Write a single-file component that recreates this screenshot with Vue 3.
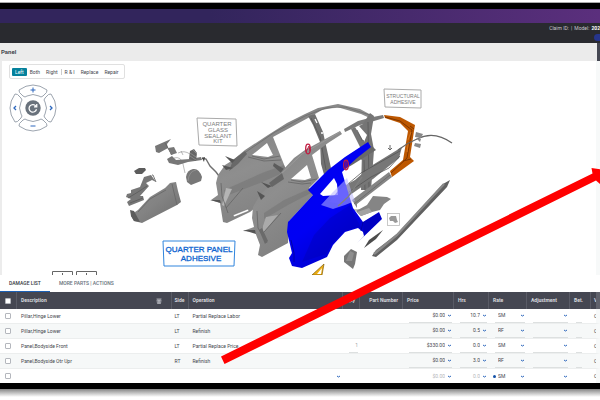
<script setup>
import { ref } from 'vue'

const side = ref('Left')
const sides = ['Left', 'Both', 'Right']
const actions = ['R & I', 'Replace', 'Repair']

const lines = ref([
  { id: 1, description: 'Pillar,Hinge Lower', side: 'LT', operation: 'Partial Replace Labor', qty: '', price: '$0.00', hrs: '10.7', rate: 'SM' },
  { id: 2, description: 'Pillar,Hinge Lower', side: 'LT', operation: 'Refinish', qty: '', price: '$0.00', hrs: '0.5', rate: 'RF' },
  { id: 3, description: 'Panel,Bodyside Front', side: 'LT', operation: 'Partial Replace Price', qty: '1', price: '$330.00', hrs: '0.0', rate: 'SM' },
  { id: 4, description: 'Panel,Bodyside Otr Upr', side: 'RT', operation: 'Refinish', qty: '', price: '$0.00', hrs: '3.0', rate: 'RF' },
  { id: 5, description: '', side: '', operation: '', qty: '', price: '$0.00', hrs: '0.0', rate: 'SM', draft: true }
])
</script>

<template>
  <div class="page">
    <div class="device">
      <div class="brand"></div>
      <header class="claim">
        <div class="claim-line"><span>Claim ID:</span><span class="bar">|</span><span>Model:</span><b>202</b></div>
        <button class="pill" type="button" aria-label="Claim details"></button>
      </header>
      <div class="crumb"><h1>Panel</h1><span class="crumb-end"></span></div>

      <main class="viewer">
        <svg class="scene" viewBox="0 61 600 214" preserveAspectRatio="xMinYMin meet" role="img" aria-label="Exploded view of the body side">
          <defs>
            <linearGradient id="steel" x1="0" y1="0" x2="1" y2="1">
              <stop offset="0" stop-color="#8c8c8c" /><stop offset=".5" stop-color="#838383" /><stop offset="1" stop-color="#6c6c6c" />
            </linearGradient>
            <linearGradient id="panel" x1="0" y1="0" x2=".6" y2="1">
              <stop offset="0" stop-color="#7c7c7c" /><stop offset=".5" stop-color="#8e8e8e" /><stop offset="1" stop-color="#7c7c7c" />
            </linearGradient>
            <linearGradient id="blue" x1="0" y1="0" x2=".6" y2="1">
              <stop offset="0" stop-color="#0000f0" /><stop offset=".6" stop-color="#0000f4" /><stop offset="1" stop-color="#0000c4" />
            </linearGradient>
          </defs>

          <!-- lamp wiring and trim -->
          <g fill="#777">
            <path d="M155 146 171 139 167 144 168 148 159 153 156 152Z" />
            <path d="M165 143 172 155" stroke="#666" fill="none" />
            <path d="M168 148 174 147 177 153 171 155Z" fill="#777" />
            <path d="M167 159 172 156 176 160 190 159 201 157 202 160 188 162 178 165 169 163Z" />
            <path d="M178 153Q184 150 190 154M174 158Q181 156 183 164L185 173M181 151 183 155" stroke="#777" stroke-width=".5" fill="none" />
            <path d="M190 151 194 149 197 153 196 161 189 159Z" fill="#666" />
            <path d="M190 153 196 157M190 156 196 160M193 150 197 154" stroke="#aaa" stroke-width=".5" />
            <path d="M202 158 206 159 210 166 216 172 219 176" stroke="#707070" stroke-width="1.4" fill="none" />
            <path d="M202 158 205 157 204 162Z" fill="#444" />
            <path d="M186 177Q187 170 193 169Q199 168 202 177L201 181 191 185 187 182Z" />
            <path d="M188 181Q189 171 196 170" stroke="#999" stroke-width=".7" fill="none" />
            <path d="M134 171 139 168 145 168 146 170 142 174 136 174Z" fill="#5c5c5c" />
            <path d="M131 190 140 187 144 177 151 175 156 182 152 180 146 183 149 186 140 196 143 196 144 200 129 206 127 202 131 199 126 197 127 194 131 193Z" />
            <path d="M152 175 153 175 156 182M128 198 138 192 147 186M130 203 143 198" stroke="#5a5a5a" stroke-width=".8" fill="none" />
            <path d="M132 214 138 210 150 197 165 188 170 183 176 182 178 191 181 202 177 205 142 223 134 221 131 216Z" fill="url(#steel)" />
            <path d="M172 184 177 205M138 212 150 199 166 190" stroke="#666" stroke-width=".8" fill="none" />
            <path d="M130 210 134 211 140 222 134 221 131 216Z" fill="#5c5c5c" />
          </g>

          <!-- outer body side, gray -->
          <path fill="url(#panel)" fill-rule="evenodd" d="M218 175 225 165 233 160 245 150 268 135 287 123 305 114 318 108 338 104 360 109 373 116 374 120 361 114 337 107 322 110 308 118 273 137 285 167 290 175 272 190 259 205 250 212 227 223 223 222 220 203 211 200 218 195 216 183ZM252 155 267 143 273 155 268 157Z" />
          <path d="M240 156 275 132 305 116 326 108 345 107 370 115" stroke="#686868" stroke-width=".7" fill="none" />
          <path d="M252 156 264 159 280 156M248 157 264 161 281 160" stroke="#606060" stroke-width=".7" fill="none" />
          <path d="M224 190 262 173 284 165 287 171 260 183 226 196Z" fill="#666" opacity=".35" />
          <path d="M274 163 284 169 281 173 273 166Z" fill="#5c5c5c" />
          <path d="M229 171 233 160 245 151 247 154 238 164Z" fill="#686868" />
          <path d="M225 156 235 160 232 163ZM222 165 233 168 226 170ZM210 200 220 200 221 203Z" fill="#555" />
          <path d="M222 205 226 188 232 189 224 206Z" fill="#b4b4b4" />
          <path d="M221 183 222 196 228 213M226 208 243 188" stroke="#646464" stroke-width=".8" fill="none" />
          <path d="M233 215 248 209 249 211 234 217Z" fill="#fff" stroke="#666" stroke-width=".5" />
          <path d="M308 116 315 114 323 132 331 168 325 178 321 164 320 142 313 125Z" fill="#717171" />
          <path d="M311 118 320 137 326 170" stroke="#565656" stroke-width=".8" fill="none" />
          <path d="M315 119 317 123" stroke="#fff" stroke-width="1.3" />
          <circle cx="322" cy="133" r="1" fill="#fff" />

          <!-- inner body side, gray -->
          <path fill="url(#panel)" fill-rule="evenodd" d="M340 131 342 134 328 143 312 155 319 178 309 188 314 194 289 221 288 243 262 257 258 255 260 245 255 232 243 231 254 227 252 218 253 207 260 195 272 183 283 170 294 158 305 150ZM291 179 307 165 311 178 305 180Z" />
          <path d="M278 177 302 154 340 132" stroke="#9c9c9c" stroke-width=".9" fill="none" />
          <path d="M291 180 302 182 317 179M288 182 302 184 311 183" stroke="#606060" stroke-width=".7" fill="none" />
          <path d="M264 213 284 200 311 188 313 192 288 205 264 219Z" fill="#666" opacity=".35" />
          <path d="M269 183 282 173 284 179 272 187Z" fill="#666" />
          <path d="M261 182 272 186 268 188ZM257 191 265 196 261 200ZM243 230 255 230 256 234Z" fill="#555" />
          <path d="M263 226 266 217 278 215 263 233Z" fill="#aaa" />
          <path d="M257 211 258 228 267 243M264 232 281 213" stroke="#646464" stroke-width=".8" fill="none" />
          <path d="M259 230 262 228 268 241 265 244Z" fill="#6a6a6a" />

          <!-- inner frame and pillars -->
          <path d="M344 129 358 121 373 117 383 115 384 118 374 121 360 125 345 132Z" fill="#7a7a7a" />
          <path d="M370 113 374 116 371 134 374 150 371 190 361 190 362 151 351 129 355 127 364 142 367 135 359 126 363 124Z" fill="#757575" />
          <path d="M357 130 364 144M368 122 369 188M364 160 365 190" stroke="#585858" stroke-width=".8" fill="none" />
          <path d="M337 190 355 180 371 166 402 147 399 158 373 179 340 202Z" fill="#777" />
          <path d="M361 141 364 140 364 158 361 160Z" fill="#757575" />
          <path d="M343 196 371 177 389 168 400 156M348 184 361 173 400 151" stroke="#555" stroke-width=".8" fill="none" />
          <path d="M352 200 389 172 392 177 357 204 357 208Z" fill="#858585" />
          <path d="M354 204 390 175M353 210 364 210 370 204" stroke="#666" stroke-width=".8" fill="none" />
          <path d="M372 146 376 150 352 165 345 169 345 166Z" fill="#686868" />
          <path d="M390 145 390 150M388 148 390 150 392 148" stroke="#666" fill="none" />

          <!-- rear pillar, orange -->
          <path d="M384 115 400 117 415 125 414 131 410 157 414 161 392 177 390 171 403 160 408 131 400 123 385 118Z" fill="#bd5700" />
          <path d="M385 117 400 121 412 130 407 158 391 173M410 126 414 129M403 161 411 159" stroke="#7d3600" fill="none" />
          <path d="M411 132 408 140M408 144 407 152" stroke="#d8761d" fill="none" />
          <path d="M398 150Q407 143 417 139Q434 130 452 143" stroke="#656565" stroke-width="1.2" fill="none" />
          <path d="M416 132 423 134 421 138 415 137ZM415 143 421 144 420 148 414 146ZM416 138 421 139 420 142Z" fill="#898989" />

          <!-- quarter panel, blue -->
          <path d="M308 190 328 170 345 157 368 142 371 147 357 158 342 172 348 192 353 208 363 222 379 212 382 219 357 243 364 236 363 232 358 228 345 232 333 245 327 257 302 268 292 266 289 258 292 253 287 232 288 222 313 195Z" fill="url(#blue)" />
          <path d="M320 194 334 178 337 184 338 195 323 196Z" fill="#fff" />
          <path d="M291 240 294 253 294 262M363 222 361 231" stroke="#0000a4" fill="none" />
          <path d="M350 205 330 218 314 235 302 262 326 254 333 243 345 231 358 227 362 229 357 220Z" fill="#0000a4" opacity=".3" />
          <path d="M363 222 379 213 381 219 364 235Z" fill="#0000b0" opacity=".5" />
          <path d="M321 205 333 192 347 178 351 190 355 201 345 205 333 209Z" fill="#b8b4ff" opacity=".55" />
          <path d="M329 202 338 191 346 184 348 197 340 204Z" fill="#6c66ff" opacity=".6" />
          <path d="M338 206 348 197 362 177" stroke="#808080" stroke-width="1.3" fill="none" />
          <path d="M356 211 367 205 373 196 387 197 391 199 384 204 380 210 372 212 361 216Z" fill="#858585" />
          <path d="M357 212 369 208 372 212 361 216Z" fill="#a2a2a2" />
          <path d="M344 256 351 249 357 252 355 264 353 269 344 262Z" fill="#777" />
          <path d="M350 251 354 253 352 261 346 261Z" fill="#8e8e8e" />
          <path d="M364 248 369 240 383 230 376 239Z" fill="#4c4c4c" />
          <path d="M450 180 447 187 397 240 376 257 372 256 376 250 397 234 443 184Z" fill="#606060" />
          <path d="M374 254 397 235 444 184" stroke="#888" fill="none" stroke-width="2.4" />
          <path d="M312 275 324 264 322 275Z" fill="#edae13" stroke="#7e5b08" stroke-width=".7" />
          <path d="M317 274 322 268 321 274Z" fill="#fff" />
          <g fill="none" stroke="#c01c40" stroke-width="1.300">
            <ellipse cx="308" cy="149" rx="2.3" ry="4.800" /><path d="M306 152 309 146 310 151" stroke-width="1" />
            <ellipse cx="346" cy="165" rx="2.3" ry="4.800" /><path d="M346 161V169" stroke-width="1" />
          </g>

          <!-- labels -->
          <path d="M197 118 236 119 237 146 199 145Z" fill="#fff" stroke="#aaa" />
          <g class="tag kit"><text x="217" y="126">QUARTER</text><text x="218" y="132">GLASS</text><text x="218" y="138">SEALANT</text><text x="218" y="143">KIT</text></g>
          <path d="M384 89 421 90 421 108 385 107Z" fill="#fff" stroke="#aaa" />
          <g class="tag small"><text x="403" y="98">STRUCTURAL</text><text x="403" y="104">ADHESIVE</text></g>
          <path d="M163 241 235 241 234 266 164 266Z" fill="#fff" stroke="#3185dd" />
          <g class="tag picked"><text x="199" y="252">QUARTER PANEL</text><text x="201" y="261">ADHESIVE</text></g>
          <rect x="387.500" y="213.500" width="12" height="12" fill="#fff" stroke="#bbb" stroke-width=".8" />
          <path d="M389 218 391 216 396 216 397 220 398 222 395 223 393 221 390 221Z" fill="#999" />
          <path d="M52.500 276V271.500H72.500V276M76.500 276V271.500H96.500V276M62.500 275V273M86.500 275V273" stroke="#666" fill="none" />
        </svg>

        <div class="tools">
          <div class="toolbar">
            <button v-for="s in sides" :key="s" type="button" :class="{ on: side === s }" @click="side = s">{{ s }}</button>
            <span class="sep"></span>
            <button v-for="a in actions" :key="a" type="button">{{ a }}</button>
          </div>
          <div class="dial">
            <svg class="ring" viewBox="0 0 48 48" fill="#fff" stroke="#929ba6" stroke-width=".9" aria-hidden="true">
              <path d="M10 6Q24-4 38 6Q39 8 34 12Q32 14 30 12Q24 9 18 12Q16 14 14 12Q9 8 10 6Z" />
              <path d="M10 42Q24 52 38 42Q39 40 34 36Q32 34 30 36Q24 39 18 36Q16 34 14 36Q9 40 10 42Z" />
              <path d="M6 10Q-4 24 6 38Q8 39 12 34Q14 32 12 30Q9 24 12 18Q14 16 12 14Q8 9 6 10Z" />
              <path d="M42 10Q52 24 42 38Q40 39 36 34Q34 32 36 30Q39 24 36 18Q34 16 36 14Q40 9 42 10Z" />
              <circle cx="24" cy="24" r="7.700" fill="#69727c" stroke="none" />
            </svg>
            <button class="up" type="button" aria-label="Zoom in"><svg viewBox="0 0 8 8"><path d="M4 1.500V6.500M1.500 4H6.500" /></svg></button>
            <button class="west" type="button" aria-label="Rotate left"><svg viewBox="0 0 8 8"><path d="M5 2 3 4 5 6" stroke-width="1.300" /></svg></button>
            <button class="mid" type="button" aria-label="Reset view"><svg viewBox="0 0 8 8"><path d="M6.300 2.500A3 3 0 1 0 6.800 5M7 .8V3H4.800" /></svg></button>
            <button class="east" type="button" aria-label="Rotate right"><svg viewBox="0 0 8 8"><path d="M3 2 5 4 3 6" stroke-width="1.300" /></svg></button>
            <button class="down" type="button" aria-label="Zoom out"><svg viewBox="0 0 8 8"><path d="M1.500 4H6.500" /></svg></button>
          </div>
        </div>
      </main>

      <section class="sheet">
        <nav class="tabs">
          <button class="tab active" type="button">DAMAGE LIST</button>
          <button class="tab" type="button">MORE PARTS | ACTIONS</button>
        </nav>
        <table>
          <colgroup>
            <col class="w-check"><col class="w-wide"><col class="w-check"><col class="w-wide"><col class="w-check">
            <col class="w-part"><col class="w-price"><col class="w-hrs"><col class="w-rate"><col class="w-part"><col class="w-bet"><col class="w-end">
          </colgroup>
          <thead>
            <tr>
              <th><input type="checkbox" aria-label="Select all lines"></th>
              <th>
                <div class="head-split">Description
                  <button type="button" aria-label="Delete selected"><svg viewBox="0 0 6 6"><path d="M.5 1H5.500M1 2H5L4.500 5.500H1.500ZM2.500 2V5M3.500 2V5" /></svg></button>
                </div>
              </th>
              <th class="tight">Side</th><th>Operation</th><th class="num">Qty</th><th class="num">Part Number</th>
              <th>Price</th><th>Hrs</th><th>Rate</th><th>Adjustment</th><th>Bet.</th><th class="tight">V</th>
            </tr>
          </thead>
          <tbody>
            <tr v-for="l in lines" :key="l.id" :class="{ draft: l.draft }">
              <td><input type="checkbox" :aria-label="'Select line ' + l.id"></td>
              <td>{{ l.description }}</td>
              <td class="tight">{{ l.side }}</td>
              <td>
                <div v-if="l.draft" class="open"><button type="button" aria-label="Choose operation"><svg class="chev" viewBox="0 0 5 5"><path d="M1 2Q2.500 4 4 2" /></svg></button></div>
                <template v-else>{{ l.operation }}</template>
              </td>
              <td><div v-if="l.qty" class="field qty"><input v-model="l.qty" type="text" aria-label="Quantity"></div></td>
              <td></td>
              <td>
                <div class="field"><input v-model="l.price" type="text" aria-label="Price"><button type="button" aria-label="Price options"><svg class="chev" viewBox="0 0 5 5"><path d="M1 2Q2.500 4 4 2" /></svg></button></div>
              </td>
              <td>
                <div class="field"><input v-model="l.hrs" type="text" aria-label="Hours"><button type="button" aria-label="Hours options"><svg class="chev" viewBox="0 0 5 5"><path d="M1 2Q2.500 4 4 2" /></svg></button></div>
              </td>
              <td>
                <div class="field rate">
                  <span v-if="l.draft" class="dot"></span>
                  <select v-model="l.rate" aria-label="Rate"><option>SM</option><option>RF</option></select>
                  <svg class="chev" viewBox="0 0 5 5"><path d="M1 2Q2.500 4 4 2" /></svg>
                </div>
              </td>
              <td>
                <div class="field"><input type="text" aria-label="Adjustment"><button type="button" aria-label="Adjustment options"><svg class="chev" viewBox="0 0 5 5"><path d="M1 2Q2.500 4 4 2" /></svg></button></div>
              </td>
              <td><div class="field bet"><input type="text" aria-label="Betterment"></div></td>
              <td class="tight end">C</td>
            </tr>
          </tbody>
        </table>
      </section>
    </div>
    <div class="shade"></div>

    <svg class="arrow" viewBox="0 0 600 400" preserveAspectRatio="xMinYMin meet" aria-hidden="true">
      <path d="M221 356.500 592.500 173.500 591.500 168 604 170 600 184 596 180.500 224.500 364Z" fill="#f00" />
    </svg>
  </div>
</template>

<style>
body {
  background: #fff;
  overflow-x: hidden;
}
</style>

<style scoped>
* {
  box-sizing: border-box;
}
.page {
  position: relative;
  overflow: hidden;
  padding-top: 3px;
  font-family: Roboto, "Liberation Sans", sans-serif;
  font-size: 5px;
  color: #44474e;
}
button, input, select {
  font: inherit;
  color: inherit;
  border: 0;
  padding: 0;
  margin: 0;
  background: none;
  min-width: 0;
}
svg {
  display: block;
}
.device {
  border-top: 6px solid #000;
  border-bottom: 6px solid #000;
  box-shadow: 0 -1px 0 #aaa;
}
.shade {
  height: 8px;
  background: linear-gradient(#858585, #fff);
}
.brand {
  height: 14px;
  background: linear-gradient(90deg, #32255c 0 35%, #5b2f7d);
}
.claim {
  height: 20px;
  background: #292a2f;
  color: #c6c6ca;
  display: flex;
  flex-direction: column;
  align-items: flex-end;
  gap: 2px;
  padding-top: 2px;
  overflow: hidden;
}
.claim-line {
  display: flex;
  gap: 2px;
  line-height: 7px;
  white-space: nowrap;
}
.claim-line b {
  color: #fff;
}
.pill {
  width: 6px;
  height: 7px;
  border-radius: 4px 0 0 4px;
  background: #26358c;
}
.crumb {
  height: 18px;
  background: #ebebeb;
  display: flex;
  justify-content: space-between;
  align-items: center;
}
.crumb h1 {
  margin: 0 1px;
  font-size: 6px;
  line-height: 8px;
}
.crumb-end {
  width: 3px;
  height: 18px;
  background: #454752;
}
.viewer {
  display: grid;
  background: #fff;
  border-left: 2px solid #ececec;
  border-right: 4px solid #f7f9f9;
}
.scene, .tools {
  grid-area: 1 / 1;
}
.scene {
  width: calc(100% + 6px);
  margin: 0 -4px 0 -2px;
}
.tag {
  font-family: "Liberation Sans", sans-serif;
  text-anchor: middle;
  fill: #7c7c7c;
}
.kit {
  font-size: 6px;
}
.small {
  font-size: 5px;
}
.picked {
  font-size: 8px;
  fill: #0b63cf;
  stroke: #0b63cf;
  stroke-width: .3px;
}
.tools {
  padding: 3px 7px;
  display: flex;
  flex-direction: column;
  align-items: flex-start;
  gap: 5px;
}
.toolbar {
  display: flex;
  align-items: center;
  height: 15px;
  padding: 0 2px;
  border: 1px solid #e0e0e0;
  border-radius: 2px;
  background: #fff;
}
.toolbar button {
  height: 8px;
  line-height: 8px;
  padding: 0 3px;
}
.toolbar .on {
  background: #04819c;
  color: #fff;
  border-radius: 1px;
}
.sep {
  width: 1px;
  height: 6px;
  background: #ccc;
}
.dial {
  display: grid;
  grid-template-columns: repeat(3, 16px);
  grid-template-rows: repeat(3, 16px);
  grid-template-areas: ". n ." "w c e" ". s .";
}
.dial .ring {
  grid-area: 1 / 1 / 4 / 4;
  width: 48px;
  height: 48px;
}
.dial button {
  display: grid;
  place-items: center;
}
.dial button svg {
  width: 8px;
  height: 8px;
  fill: none;
  stroke: #2c67bd;
}
.dial .up { grid-area: n; padding-bottom: 4px; }
.dial .west { grid-area: w; padding-right: 4px; }
.dial .mid { grid-area: c; }
.dial .east { grid-area: e; padding-left: 4px; }
.dial .down { grid-area: s; padding-top: 4px; }
.dial .mid svg {
  width: 10px;
  height: 10px;
  stroke: #fff;
}
.sheet {
  overflow: hidden;
}
.tabs {
  display: flex;
  height: 17px;
  background: #fff;
  box-shadow: 0 -1px 1px #eee;
}
.tab {
  padding: 0 9px;
  line-height: 16px;
  font-weight: 500;
  color: #66727c;
  border-bottom: 1px solid transparent;
}
.tab.active {
  color: #33363d;
  border-color: #1c60b5;
}
table {
  width: 100%;
  table-layout: fixed;
  border-collapse: separate;
  border-spacing: 0;
}
.w-check { width: 17px; }
.w-part { width: 43px; }
.w-price { width: 51px; }
.w-hrs { width: 35px; }
.w-rate { width: 38px; }
.w-bet { width: 21px; }
.w-end { width: 9px; }
th, td {
  padding: 0 2px 0 4px;
  text-align: left;
  white-space: nowrap;
  vertical-align: middle;
  overflow: hidden;
}
.tight {
  padding-left: 3px;
}
th {
  height: 17px;
  line-height: 17px;
  font-weight: 700;
  background: #454752;
  color: #d8d9de;
  border-right: 1px solid #595b66;
}
th.num {
  text-align: right;
  padding-right: 4px;
}
.head-split {
  display: flex;
  align-items: center;
  justify-content: space-between;
  padding-right: 7px;
}
.head-split svg {
  width: 6px;
  height: 6px;
  fill: none;
  stroke: #c9cbd2;
  stroke-width: .7;
}
td {
  height: 15px;
  line-height: 13px;
  background: #fff;
  border-bottom: 1px solid #eceeee;
}
tbody tr:nth-child(even) td {
  background: #f6f8f8;
}
.draft td {
  height: 14px;
  border-bottom: 0;
}
th:first-child, td:first-child {
  padding-left: 5px;
}
input[type="checkbox"] {
  appearance: none;
  display: block;
  width: 6px;
  height: 6px;
  border: 1px solid #b4b7bd;
  border-radius: 1px;
  background: #fff;
}
.field {
  display: flex;
  align-items: center;
  gap: 2px;
  height: 14px;
  margin: 0 0 0 2px;
  border-bottom: 1px solid #dde0e0;
}
.field input {
  flex: 1;
  width: 0;
  height: 13px;
  text-align: right;
}
.field select {
  flex: 1;
  appearance: none;
  height: 13px;
  padding-left: 3px;
}
.draft .field {
  border-bottom: 0;
}
.draft .field input {
  color: #b5b7bb;
}
.draft .rate {
  margin-left: 0;
}
.draft select {
  padding-left: 0;
}
.dot {
  width: 3px;
  height: 3px;
  border-radius: 50%;
  background: #1451a8;
}
.qty {
  color: #a0a3a8;
}
.bet {
  width: 6px;
}
.chev {
  width: 5px;
  height: 5px;
  fill: none;
  stroke: #2c67bd;
}
.open {
  display: flex;
  justify-content: flex-end;
}
td.end, th:last-child {
  border-right: 4px solid #f7f9f9;
  padding-right: 0;
}
th:last-child {
  border-right-color: #60626c;
}
.arrow {
  position: absolute;
  top: 0;
  left: 0;
  width: 100%;
  pointer-events: none;
}
</style>
